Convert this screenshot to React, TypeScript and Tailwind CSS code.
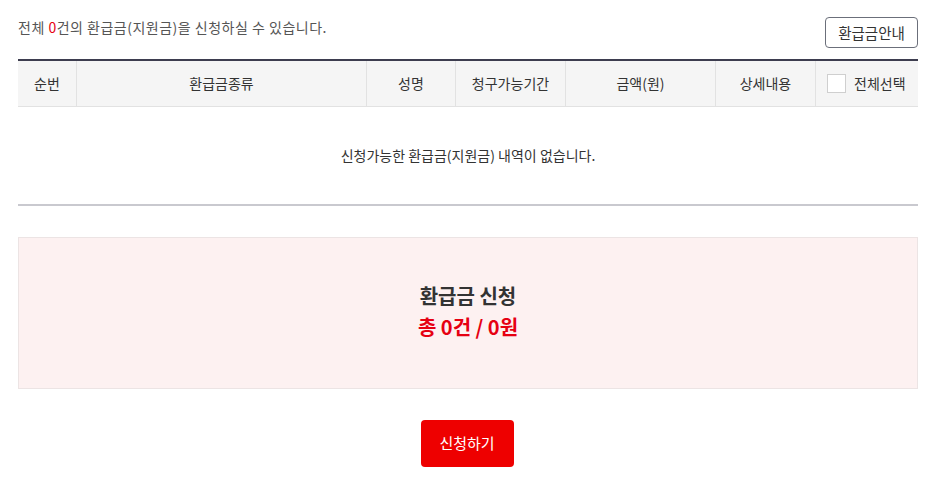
import React from "react";

const font = { fontFamily: '"Noto Sans CJK KR", "Noto Sans", sans-serif' };

export default function App() {
  const cols = [
    { label: "순번", w: "w-[59px]" },
    { label: "환급금종류", w: "w-[290px]" },
    { label: "성명", w: "w-[89px]" },
    { label: "청구가능기간", w: "w-[110px]" },
    { label: "금액(원)", w: "w-[150px]" },
    { label: "상세내용", w: "w-[100px]" },
  ];
  return (
    <div style={font} className="w-[932px] h-[488px] bg-white pl-[18px] pr-[14px] pt-[17px] text-[#333]">
      <div className="flex items-start justify-between">
        <p className="text-[14px] leading-[20px] text-[#555] tracking-[0.5px]">
          전체 <span className="text-[#e60012]">0</span>건의 환급금(지원금)을 신청하실 수 있습니다.
        </p>
        <button className="h-[31px] w-[93px] rounded-[4px] border border-[#6b6f7a] text-[14.5px] text-[#333] bg-white">
          환급금안내
        </button>
      </div>

      <div className="mt-[11px] border-t-2 border-[#3d3d4f]">
        <div className="flex h-[46px] bg-[#f5f5f5] border-b border-[#e2e2e2] text-[14px] text-[#333]">
          {cols.map((c, i) => (
            <div
              key={i}
              className={`${c.w} flex items-center justify-center border-r border-[#e2e2e2]`}
            >
              {c.label}
            </div>
          ))}
          <div className="flex-1 flex items-center pl-[11px] gap-[8px]">
            <span className="block w-[19px] h-[19px] bg-white border border-[#cfcfcf]" />
            <span>전체선택</span>
          </div>
        </div>
        <div className="h-[99px] flex items-center justify-center border-b-2 border-[#c9c9cf] text-[14px] text-[#333]">
          신청가능한 환급금(지원금) 내역이 없습니다.
        </div>
      </div>

      <div className="mt-[31px] h-[152px] bg-[#fdf1f1] border border-[#ece4e4] flex flex-col items-center justify-center pb-[4px]">
        <div className="text-[20px] leading-[28px] font-bold text-[#333]">환급금 신청</div>
        <div className="text-[20px] leading-[28px] font-bold text-[#e60012] mt-[3px]">총 0건 / 0원</div>
      </div>

      <div className="mt-[31px] flex justify-center pr-[2px]">
        <button className="h-[47px] w-[93px] rounded-[4px] bg-[#ee0000] text-white text-[15px]">
          신청하기
        </button>
      </div>
    </div>
  );
}
